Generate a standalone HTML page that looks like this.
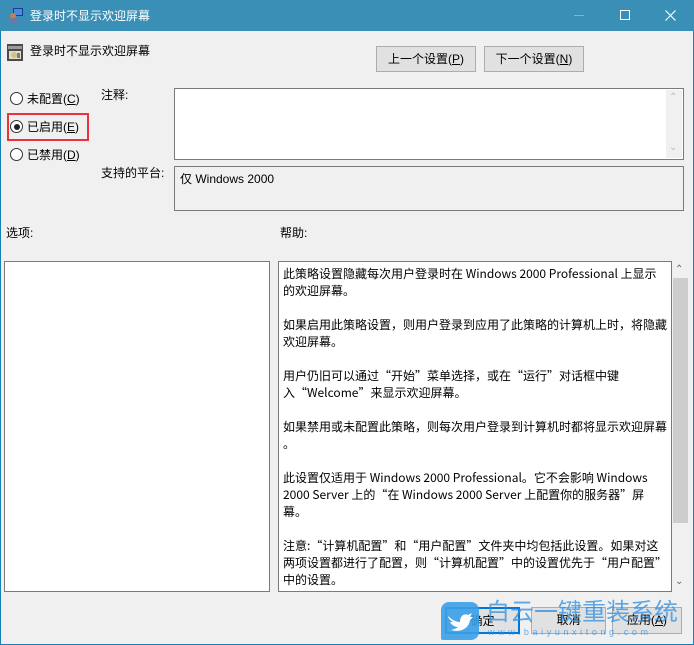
<!DOCTYPE html>
<html><head><meta charset="utf-8"><style>
*{margin:0;padding:0;box-sizing:border-box}
body{width:694px;height:645px;background:#f0f0f0;font-family:"Liberation Sans","Noto Sans CJK SC",sans-serif;font-size:12px;color:#000;position:relative;overflow:hidden}
.a{position:absolute;white-space:nowrap}
.tb{left:0;top:0;width:694px;height:31px;background:#3a8fb7;color:#fff}
.btn{background:#e1e1e1;border:1px solid #adadad;text-align:center;line-height:24px}
.box{border:1px solid #7a7a7a;background:#fff}
.rad{width:13px;height:13px;border:1px solid #333;border-radius:50%;background:#fff}
.help{line-height:17px;padding:3px 4px;white-space:nowrap;font-family:"Noto Sans CJK SC","Liberation Sans",sans-serif}
u{text-decoration:underline}
</style></head><body>
<div class="a" style="left:0;top:0;width:694px;height:645px;border:1px solid #1a7fb8;border-top:none"></div>
<div class="a tb">
<svg class="a" style="left:8px;top:7px" width="16" height="16"><rect x="5" y="1" width="10" height="8" fill="#1e3c8c"/><rect x="6" y="2" width="8" height="6" fill="#4a8ae0"/><circle cx="5" cy="9" r="3" fill="#c08050"/><rect x="1" y="11" width="9" height="5" fill="#6a7aa0"/></svg>
<div class="a" style="left:30px;top:7px;font-size:12px">登录时不显示欢迎屏幕</div>
<div class="a" style="left:574px;top:15px;width:10px;height:1px;background:#7fb3d0"></div>
<div class="a" style="left:620px;top:10px;width:10px;height:10px;border:1px solid #fff"></div>
<svg class="a" style="left:665px;top:10px" width="11" height="11"><path d="M0.5 0.5L10.5 10.5M10.5 0.5L0.5 10.5" stroke="#fff" stroke-width="1.2"/></svg>
</div>
<svg class="a" style="left:7px;top:44px" width="16" height="17"><rect x="0" y="0" width="16" height="17" fill="#4a4a4a"/><rect x="1" y="2" width="14" height="3" fill="#9a9a9a"/><rect x="2" y="7" width="12" height="8" fill="#e6dcc0"/><circle cx="7" cy="11" r="3" fill="#d0c090"/><rect x="10" y="9" width="3" height="5" fill="#708090"/></svg>
<div class="a" style="left:30px;top:42px">登录时不显示欢迎屏幕</div>
<div class="a btn" style="left:376px;top:46px;width:100px;height:26px">上一个设置(<u>P</u>)</div>
<div class="a btn" style="left:484px;top:46px;width:100px;height:26px">下一个设置(<u>N</u>)</div>
<div class="a rad" style="left:10px;top:92px"></div>
<div class="a" style="left:27px;top:90px">未配置(<u>C</u>)</div>
<div class="a" style="left:7px;top:113px;width:82px;height:28px;border:2px solid #e8343a"></div>
<div class="a rad" style="left:10px;top:120px"></div>
<div class="a" style="left:13.5px;top:123.5px;width:6px;height:6px;border-radius:50%;background:#222"></div>
<div class="a" style="left:27px;top:118px">已启用(<u>E</u>)</div>
<div class="a rad" style="left:10px;top:148px"></div>
<div class="a" style="left:27px;top:146px">已禁用(<u>D</u>)</div>
<div class="a" style="left:101px;top:86px">注释:</div>
<div class="a box" style="left:174px;top:88px;width:510px;height:72px"></div>
<div class="a" style="left:666px;top:90px;width:16px;height:68px;background:#f0f0f0"></div>
<div class="a" style="left:669px;top:92px;color:#bbb;font-size:10px">⌃</div>
<div class="a" style="left:669px;top:142px;color:#bbb;font-size:10px">⌄</div>
<div class="a" style="left:101px;top:164px">支持的平台:</div>
<div class="a box" style="left:174px;top:166px;width:510px;height:45px;background:#f0f0f0"></div>
<div class="a" style="left:180px;top:170px">仅 Windows 2000</div>
<div class="a" style="left:6px;top:224px">选项:</div>
<div class="a" style="left:280px;top:224px">帮助:</div>
<div class="a box" style="left:4px;top:261px;width:266px;height:331px"></div>
<div class="a box help" style="left:278px;top:261px;width:394px;height:331px;overflow:hidden">此策略设置隐藏每次用户登录时在 Windows 2000 Professional 上显示<br>的欢迎屏幕。<br><br>如果启用此策略设置，则用户登录到应用了此策略的计算机上时，将隐藏<br>欢迎屏幕。<br><br>用户仍旧可以通过“开始”菜单选择，或在“运行”对话框中键<br>入“Welcome”来显示欢迎屏幕。<br><br>如果禁用或未配置此策略，则每次用户登录到计算机时都将显示欢迎屏幕<br>。<br><br>此设置仅适用于 Windows 2000 Professional。它不会影响 Windows<br>2000 Server 上的“在 Windows 2000 Server 上配置你的服务器”屏<br>幕。<br><br>注意:“计算机配置”和“用户配置”文件夹中均包括此设置。如果对这<br>两项设置都进行了配置，则“计算机配置”中的设置优先于“用户配置”<br>中的设置。</div>
<div class="a" style="left:672px;top:262px;width:17px;height:330px;background:#f0f0f0"></div>
<div class="a" style="left:673px;top:278px;width:15px;height:245px;background:#cdcdcd"></div>
<div class="a" style="left:675px;top:264px;color:#666;font-size:10px">⌃</div>
<div class="a" style="left:675px;top:576px;color:#666;font-size:10px">⌄</div>
<div class="a btn" style="left:445px;top:607px;width:75px;height:27px;border:2px solid #0078d7">确定</div>
<div class="a btn" style="left:531px;top:607px;width:75px;height:27px">取消</div>
<div class="a btn" style="left:612px;top:607px;width:70px;height:27px">应用(<u>A</u>)</div>
<div class="a" style="left:441px;top:602px;width:38px;height:38px;background:#3aa0e8;border-radius:8px 8px 8px 2px;opacity:.9"></div>
<svg class="a" style="left:446px;top:610px" width="28" height="24"><path d="M2 6C6 10 10 12 14 12C14 6 18 3 22 5L26 3L24 7L27 7L24 10C23 18 15 23 5 20C9 19 11 18 12 17C8 17 5 14 4 12L7 12C4 10 2 8 2 6Z" fill="#fff"/></svg>
<div class="a" style="left:486px;top:596px;font-size:24px;color:#2f8fe0;opacity:.75;font-family:'Noto Sans CJK SC',sans-serif;line-height:28px">白云一键重装系统</div>
<div class="a" style="left:488px;top:627px;font-size:9px;color:#2f8fe0;opacity:.7;letter-spacing:3.6px">www.baiyunxitong.com</div>
</body></html>
